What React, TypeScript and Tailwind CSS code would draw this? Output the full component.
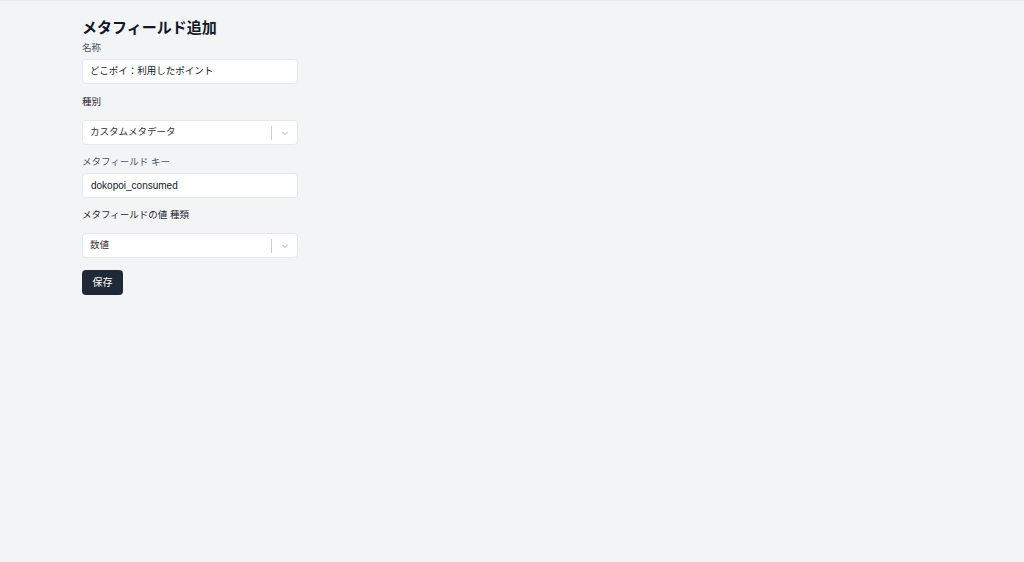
import React from "react";

function Chevron() {
  return (
    <svg width="10" height="10" viewBox="0 0 20 20" fill="#c8c8c8">
      <path d="M4.516 7.548c0.436-0.446 1.043-0.481 1.576 0l3.908 3.747 3.908-3.747c0.533-0.481 1.141-0.446 1.574 0 0.436 0.445 0.408 1.197 0 1.615-0.406 0.418-4.695 4.502-4.695 4.502-0.217 0.223-0.502 0.335-0.787 0.335s-0.57-0.112-0.789-0.335c0 0-4.287-4.084-4.695-4.502s-0.436-1.17 0-1.615z" />
    </svg>
  );
}

function SelectBox({ value }: { value: string }) {
  return (
    <div className="flex h-[25px] items-center rounded-[4px] border border-[#e5e7eb] bg-white">
      <div className="flex-1 pl-[7px] text-[9.5px] text-[#333]">{value}</div>
      <div className="h-[14px] w-px bg-[#ccc]" />
      <div className="flex w-[25px] items-center justify-center">
        <Chevron />
      </div>
    </div>
  );
}

export default function App() {
  return (
    <div
      className="min-h-[562px] w-full border-t border-[#e5e7eb] bg-[#f3f4f6]"
      style={{ fontFamily: '"Liberation Sans", "Noto Sans CJK JP", sans-serif' }}
    >
      <div className="ml-[82px] w-[216px] pt-[16px]">
        <h1
          className="text-[15px] font-bold leading-[20px] text-[#111827]"
          style={{ fontFamily: '"Noto Sans CJK JP", sans-serif' }}
        >
          メタフィールド追加
        </h1>
        <div className="mt-[4px] text-[9.5px] leading-[14px] text-[#4b5563]">名称</div>
        <div className="mt-[4px] flex h-[25px] items-center rounded-[4px] border border-[#e5e7eb] bg-white pl-[7px] text-[9.5px] text-[#111827]">
          どこポイ：利用したポイント
        </div>
        <div className="mt-[11px] text-[9.5px] leading-[14px] text-[#1f2937]">種別</div>
        <div className="mt-[11px]">
          <SelectBox value="カスタムメタデータ" />
        </div>
        <div className="mt-[10px] text-[9.5px] leading-[14px] text-[#4b5563]">メタフィールド キー</div>
        <div className="mt-[4px] flex h-[25px] items-center rounded-[4px] border border-[#e5e7eb] bg-white pl-[8px] text-[10px] text-[#111827]">
          dokopoi_consumed
        </div>
        <div className="mt-[10px] text-[9.5px] leading-[14px] text-[#1f2937]">メタフィールドの値 種類</div>
        <div className="mt-[11px]">
          <SelectBox value="数値" />
        </div>
        <button className="mt-[12px] flex h-[25px] w-[41px] items-center justify-center rounded-[4px] bg-[#1f2937] text-[10px] text-white">
          保存
        </button>
      </div>
    </div>
  );
}
